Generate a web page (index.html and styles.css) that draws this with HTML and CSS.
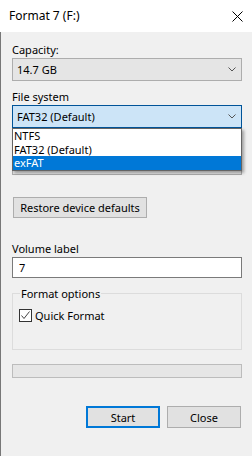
FILE: index.html
```html
<!DOCTYPE html>
<html>
<head>
<meta charset="utf-8">
<link rel="stylesheet" href="styles.css">
</head>
<body>
<div class="window">
  <div class="titlebar">
    <span class="title">Format 7 (F:)</span>
    <svg class="close" width="11" height="11" viewBox="0 0 11 11"><path d="M0.5 0.5L10.5 10.5M10.5 0.5L0.5 10.5" stroke="#000" stroke-width="1" fill="none"/></svg>
  </div>
  <div class="body">
    <div class="label">Capacity:</div>
    <div class="combo"><span>14.7 GB</span><svg class="chev" width="8" height="5" viewBox="0 0 8 5"><path d="M0.5 0.5L4 4L7.5 0.5" stroke="#555" fill="none"/></svg></div>
    <div class="label gap">File system</div>
    <div class="fs-wrap">
      <div class="combo focused"><span>FAT32 (Default)</span><svg class="chev" width="8" height="5" viewBox="0 0 8 5"><path d="M0.5 0.5L4 4L7.5 0.5" stroke="#555" fill="none"/></svg></div>
      <div class="label gap"></div>
      <div class="combo hidden-combo"></div>
      <ul class="dropdown">
        <li>NTFS</li>
        <li>FAT32 (Default)</li>
        <li class="selected">exFAT</li>
      </ul>
    </div>
    <button class="btn restore">Restore device defaults</button>
    <div class="label vol">Volume label</div>
    <div class="input">7</div>
    <fieldset class="group">
      <legend>Format options</legend>
      <div class="check"><span class="box"><svg width="11" height="11" viewBox="0 0 11 11"><path d="M1.5 5.5L4 8.5L9.5 1.5" stroke="#444" stroke-width="1" fill="none"/></svg></span><span>Quick Format</span></div>
    </fieldset>
    <div class="progress"></div>
    <div class="actions">
      <button class="btn primary">Start</button>
      <button class="btn">Close</button>
    </div>
  </div>
</div>
</body>
</html>
```
FILE: styles.css
```css
* { box-sizing: border-box; }
body { margin: 0; background: #f0f0f0; }
.window {
  width: 252px;
  height: 456px;
  background: #f0f0f0;
  font-family: "Noto Sans", sans-serif;
  font-size: 11px;
  color: #000;
  display: flex;
  flex-direction: column;
}
.titlebar {
  height: 32px;
  background: #fff;
  display: flex;
  align-items: center;
  padding-left: 9px;
  flex: none;
}
.title { font-size: 12px; line-height: 16px; }
.close { margin-left: auto; margin-right: 9px; }
.body {
  flex: 1;
  border-left: 1px solid #777;
  padding: 10px 10px 0 11px;
  display: flex;
  flex-direction: column;
}
.label { height: 15px; line-height: 15px; margin-bottom: 1px; white-space: nowrap; }
.label.gap { margin-top: 8px; }
.combo {
  height: 23px;
  border: 1px solid #adadad;
  background: #e5e5e5;
  display: flex;
  align-items: center;
  padding: 0 5px 0 4px;
}
.combo span { flex: 1; }
.combo.focused { background: #cce4f7; border-color: #005499; }
.fs-wrap { position: relative; display: flex; flex-direction: column; }
.dropdown {
  position: absolute;
  left: 0;
  right: 0;
  top: 23px;
  margin: 0;
  padding: 0;
  list-style: none;
  background: #fff;
  border: 1px solid #646464;
  box-shadow: 2px 2px 3px rgba(0,0,0,0.35);
}
.dropdown li { height: 13.5px; line-height: 13px; padding-left: 1px; }
.dropdown li.selected { background: #0078d7; color: #fff; }
.btn {
  font: inherit;
  color: #000;
  background: #e1e1e1;
  border: 1px solid #adadad;
  padding: 0;
  margin: 0;
}
.restore { align-self: flex-start; width: 134px; height: 21px; margin-top: 22px; margin-left: 1px; }
.label.vol { margin-top: 23px; }
.input {
  height: 21px;
  border: 1px solid #7a7a7a;
  background: #fff;
  line-height: 19px;
  padding-left: 6px;
}
.group {
  margin: 8px 0 0 0;
  padding: 0 6px;
  border: 1px solid #dcdcdc;
  height: 64px;
}
.group legend { padding: 0 1px; margin-left: 1px; line-height: 15px; }
.check { display: flex; align-items: center; margin-top: 7px; gap: 3px; }
.box {
  width: 13px;
  height: 13px;
  border: 1px solid #333;
  background: #fff;
  display: flex;
  align-items: center;
  justify-content: center;
}
.progress {
  margin-top: 14px;
  height: 14px;
  border: 1px solid #bcbcbc;
  background: #e6e6e6;
}
.actions {
  margin-top: 28px;
  display: flex;
  justify-content: flex-end;
  gap: 7px;
  padding-right: 1px;
}
.actions .btn { width: 74px; height: 22px; }
.btn.primary { border: 2px solid #0078d7; }
```
